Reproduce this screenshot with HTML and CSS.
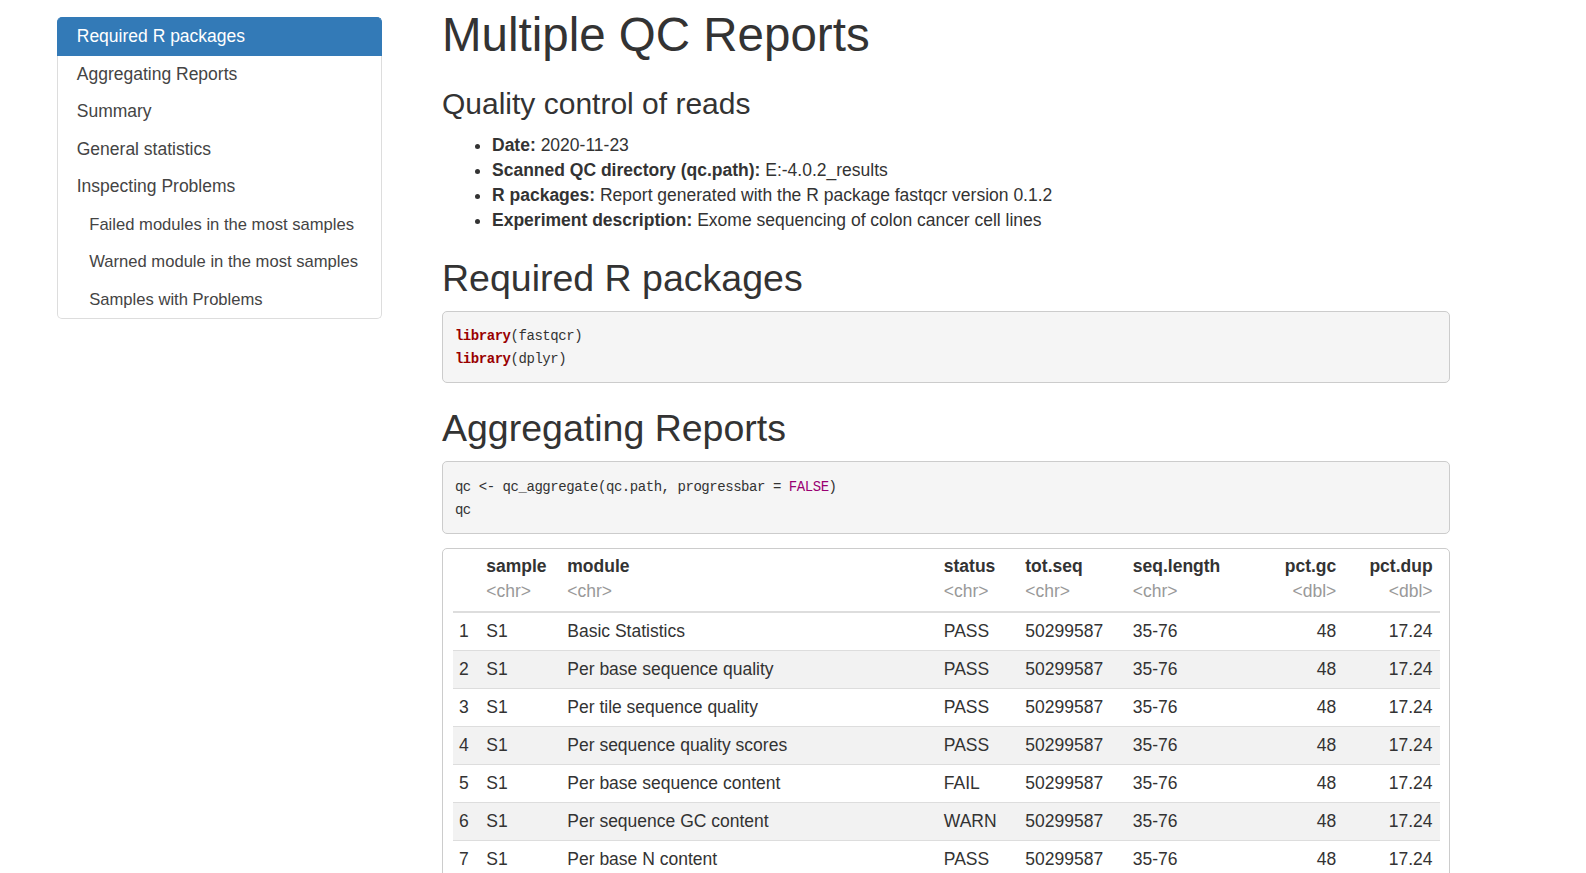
FILE: index.html
```
<!DOCTYPE html>
<html lang="en">
<head>
<meta charset="utf-8">
<title>Multiple QC Reports</title>
<link rel="stylesheet" href="styles.css">
</head>
<body>
<div class="page">
  <nav class="toc">
    <a class="toc-item active">Required R packages</a>
    <a class="toc-item">Aggregating Reports</a>
    <a class="toc-item">Summary</a>
    <a class="toc-item">General statistics</a>
    <a class="toc-item">Inspecting Problems</a>
    <a class="toc-item sub">Failed modules in the most samples</a>
    <a class="toc-item sub">Warned module in the most samples</a>
    <a class="toc-item sub">Samples with Problems</a>
  </nav>
  <main class="content">
    <h1 class="title">Multiple QC Reports</h1>
    <h3 class="subtitle">Quality control of reads</h3>
    <ul class="meta">
      <li><b>Date:</b> 2020-11-23</li>
      <li><b>Scanned QC directory (qc.path):</b> E:-4.0.2_results</li>
      <li><b>R packages:</b> Report generated with the R package fastqcr version 0.1.2</li>
      <li><b>Experiment description:</b> Exome sequencing of colon cancer cell lines</li>
    </ul>
    <h2>Required R packages</h2>
    <div class="code">
      <div class="line"><span class="fu">library</span><span>(fastqcr)</span></div>
      <div class="line"><span class="fu">library</span><span>(dplyr)</span></div>
    </div>
    <h2 class="second">Aggregating Reports</h2>
    <div class="code">
      <div class="line"><span>qc &lt;- qc_aggregate(qc.path, progressbar = </span><span class="cn">FALSE</span><span>)</span></div>
      <div class="line"><span>qc</span></div>
    </div>
    <div class="paged">
      <table class="ptable">
        <colgroup>
          <col class="c-idx"><col class="c-sample"><col class="c-module"><col class="c-status"><col class="c-tot"><col class="c-len"><col class="c-gc"><col class="c-dup">
        </colgroup>
        <thead>
          <tr>
            <th></th>
            <th><div class="hn">sample</div><div class="ht">&lt;chr&gt;</div></th>
            <th><div class="hn">module</div><div class="ht">&lt;chr&gt;</div></th>
            <th><div class="hn">status</div><div class="ht">&lt;chr&gt;</div></th>
            <th><div class="hn">tot.seq</div><div class="ht">&lt;chr&gt;</div></th>
            <th><div class="hn">seq.length</div><div class="ht">&lt;chr&gt;</div></th>
            <th class="num"><div class="hn">pct.gc</div><div class="ht">&lt;dbl&gt;</div></th>
            <th class="num"><div class="hn">pct.dup</div><div class="ht">&lt;dbl&gt;</div></th>
          </tr>
        </thead>
        <tbody>
          <tr><td class="idx">1</td><td>S1</td><td>Basic Statistics</td><td>PASS</td><td>50299587</td><td>35-76</td><td class="num">48</td><td class="num">17.24</td></tr>
          <tr class="even"><td class="idx">2</td><td>S1</td><td>Per base sequence quality</td><td>PASS</td><td>50299587</td><td>35-76</td><td class="num">48</td><td class="num">17.24</td></tr>
          <tr><td class="idx">3</td><td>S1</td><td>Per tile sequence quality</td><td>PASS</td><td>50299587</td><td>35-76</td><td class="num">48</td><td class="num">17.24</td></tr>
          <tr class="even"><td class="idx">4</td><td>S1</td><td>Per sequence quality scores</td><td>PASS</td><td>50299587</td><td>35-76</td><td class="num">48</td><td class="num">17.24</td></tr>
          <tr><td class="idx">5</td><td>S1</td><td>Per base sequence content</td><td>FAIL</td><td>50299587</td><td>35-76</td><td class="num">48</td><td class="num">17.24</td></tr>
          <tr class="even"><td class="idx">6</td><td>S1</td><td>Per sequence GC content</td><td>WARN</td><td>50299587</td><td>35-76</td><td class="num">48</td><td class="num">17.24</td></tr>
          <tr><td class="idx">7</td><td>S1</td><td>Per base N content</td><td>PASS</td><td>50299587</td><td>35-76</td><td class="num">48</td><td class="num">17.24</td></tr>
        </tbody>
      </table>
    </div>
  </main>
</div>
</body>
</html>
```

FILE: styles.css
```
html, body {
  margin: 0;
  padding: 0;
  background: #ffffff;
}

body {
  font-family: "Liberation Sans", Arial, Helvetica, sans-serif;
  font-size: 17.5px;
  line-height: 25px;
  color: #333333;
}

.page {
  display: flex;
  align-items: flex-start;
  padding-left: 57px;
}

/* ---------- TOC sidebar ---------- */
.toc {
  flex: 0 0 325px;
  width: 325px;
  margin-top: 17px;
  display: flex;
  flex-direction: column;
}

.toc-item {
  display: block;
  height: 37.5px;
  line-height: 37.5px;
  padding: 0 18.75px;
  font-size: 17.5px;
  color: #444444;
  border-left: 1px solid #dddddd;
  border-right: 1px solid #dddddd;
  white-space: nowrap;
  cursor: pointer;
}

.toc-item:first-child {
  border-top: 1px solid #dddddd;
  border-top-left-radius: 5px;
  border-top-right-radius: 5px;
}

.toc-item:last-child {
  border-bottom: 1px solid #dddddd;
  border-bottom-left-radius: 5px;
  border-bottom-right-radius: 5px;
}

.toc-item.active {
  background: #337ab7;
  border-color: #337ab7;
  color: #ffffff;
}

.toc-item.sub {
  padding-left: 31.25px;
  font-size: 16.6px;
}

/* ---------- Main content ---------- */
.content {
  flex: 0 0 1008px;
  width: 1008px;
  margin-left: 60px;
  padding-top: 9px;
}

h1.title {
  margin: 0 0 12.5px;
  font-size: 47.5px;
  line-height: 52.25px;
  font-weight: normal;
  color: #333333;
}

h3.subtitle {
  margin: 26px 0 12.5px;
  font-size: 30px;
  line-height: 33px;
  font-weight: normal;
  color: #333333;
}

h2 {
  margin: 25px 0 11.5px;
  font-size: 37.5px;
  line-height: 41.25px;
  font-weight: normal;
  color: #333333;
}

h2.second {
  margin-bottom: 12.5px;
}

.meta {
  margin: 0 0 13px;
  padding-left: 50px;
}

.meta li {
  line-height: 25px;
}

.meta b {
  font-weight: bold;
}

.code {
  margin: 0 0 14.5px;
  padding: 13.5px 11.875px 10.25px;
  background: #f5f5f5;
  border: 1px solid #cccccc;
  border-radius: 5px;
  font-family: "Liberation Mono", "Courier New", monospace;
  font-size: 14px;
  letter-spacing: -0.45px;
  line-height: 23.2px;
  color: #333333;
}

.code .line {
  display: flex;
  height: 23.2px;
  white-space: pre;
}

.code .fu {
  color: #990000;
  font-weight: bold;
}

.code .cn {
  color: #990073;
}

/* ---------- Paged table ---------- */
.paged {
  border: 1px solid #cccccc;
  border-radius: 5px;
  padding: 0 10px;
}

.ptable {
  width: 100%;
  table-layout: fixed;
  border-collapse: separate;
  border-spacing: 0;
}

.c-idx { width: 27.3px; }
.c-sample { width: 81px; }
.c-module { width: 376.5px; }
.c-status { width: 81.5px; }
.c-tot { width: 107.5px; }
.c-len { width: 123.5px; }
.c-gc { width: 93px; }
.c-dup { width: 96.3px; }

.ptable th {
  padding: 5px 7px 6.5px 6px;
  border-bottom: 2px solid #dddddd;
  text-align: left;
  vertical-align: bottom;
  white-space: nowrap;
}

.ptable th.num,
.ptable td.num {
  text-align: right;
}

.hn {
  font-weight: bold;
  color: #333333;
  line-height: 25px;
}

.ht {
  font-weight: normal;
  color: #999999;
  line-height: 25px;
}

.ptable td {
  padding: 6px 7px 6px 6px;
  line-height: 25px;
  border-top: 1px solid #dddddd;
  white-space: nowrap;
  overflow: hidden;
}

.ptable tbody tr:first-child td {
  border-top: none;
}

.ptable td.idx {
  padding-left: 6px;
  padding-right: 2px;
}

.ptable tr.even td {
  background: #f2f2f2;
}
```
